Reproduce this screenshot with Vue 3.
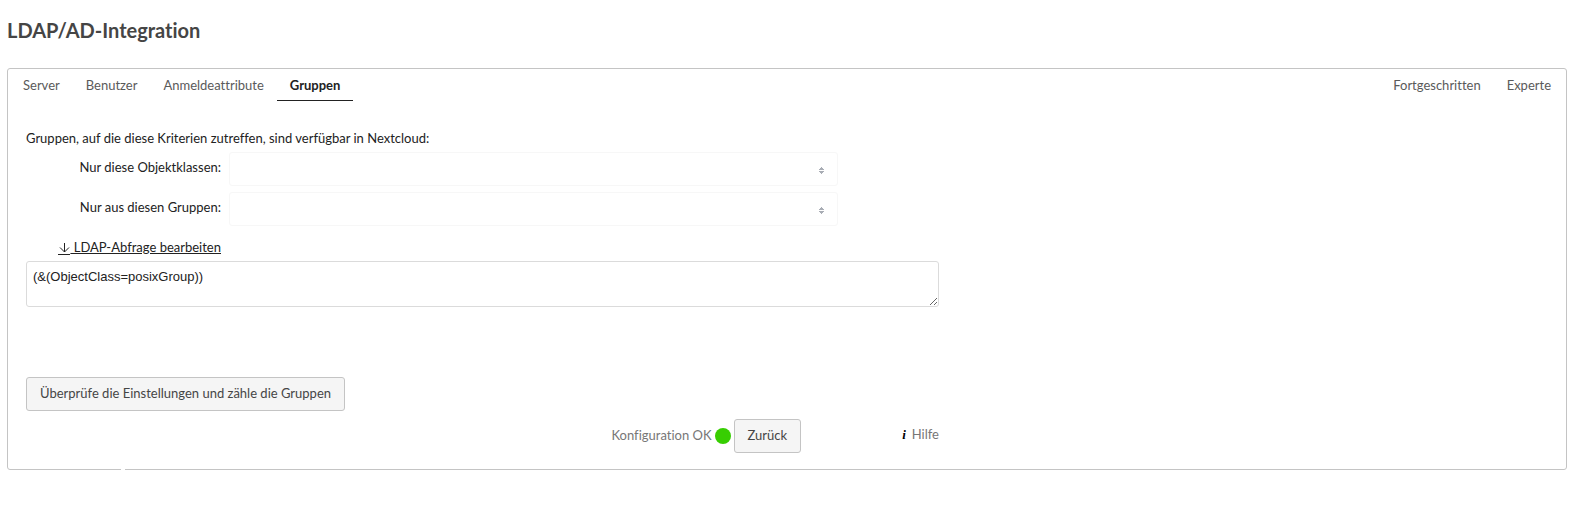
<script setup>
import { ref } from 'vue'

const tabs = ['Server', 'Benutzer', 'Anmeldeattribute', 'Gruppen']
const extraTabs = ['Fortgeschritten', 'Experte']
const active = ref('Gruppen')
const filter = ref('(&(ObjectClass=posixGroup))')
const selects = [
  { id: 'object-classes', label: 'Nur diese Objektklassen:' },
  { id: 'from-groups', label: 'Nur aus diesen Gruppen:' },
]
</script>

<template>
  <main class="page">
    <h2>LDAP/AD-Integration</h2>
    <form class="panel" @submit.prevent>
      <nav class="tabs">
        <a
          v-for="t in tabs"
          :key="t"
          href="#"
          :class="{ active: t === active }"
          @click.prevent="active = t"
        >{{ t }}</a>
        <span class="spacer"></span>
        <a
          v-for="t in extraTabs"
          :key="t"
          href="#"
          :class="{ active: t === active }"
          @click.prevent="active = t"
        >{{ t }}</a>
      </nav>

      <section class="content">
        <p>Gruppen, auf die diese Kriterien zutreffen, sind verfügbar in Nextcloud:</p>
        <div v-for="s in selects" :key="s.id" class="row">
          <label :for="s.id">{{ s.label }}</label>
          <div class="select">
            <select :id="s.id" disabled></select>
            <svg viewBox="0 0 5 7" width="5" height="7" aria-hidden="true">
              <path d="M2 0h1v1h1v1h1v1H0V2h1V1h1zM0 4h5v1H4v1H3v1H2V6H1V5H0z" />
            </svg>
          </div>
        </div>
        <div class="row edit">
          <a href="#" @click.prevent>
            <svg viewBox="0 0 12 13" width="12" height="13" aria-hidden="true">
              <path d="M6.500 1v9M2 5.500l4.500 4.500L11 5.500M0 12.500h12" />
            </svg>
            LDAP-Abfrage bearbeiten</a>
        </div>
        <textarea v-model="filter" aria-label="LDAP-Abfrage" spellcheck="false"></textarea>
        <button type="button" class="count">Überprüfe die Einstellungen und zähle die Gruppen</button>
        <div class="footer">
          <div class="status">
            <span class="caption">Konfiguration OK</span>
            <i class="dot"></i>
            <button type="button">Zurück</button>
          </div>
          <a href="#" class="help caption" @click.prevent>
            <span class="info" aria-hidden="true">i</span>Hilfe</a>
        </div>
      </section>
    </form>
  </main>
</template>

<style>
body {
  margin: 0;
  background: #fff;
}
</style>

<style scoped>
.page {
  box-sizing: border-box;
  padding: 18px 21px 44px 7px;
  font-family: Lato, "Open Sans", sans-serif;
  font-size: 13px;
  line-height: 20px;
  font-variant-ligatures: none;
  color: #222;
}
h2 {
  margin: 0 0 26px;
  font-size: 20px;
  line-height: 24px;
  font-weight: 700;
  color: #454545;
}
.panel {
  position: relative;
  border: 1px solid #c4c4c4;
  border-radius: 3px;
}
/* small break in the lower edge */
.panel::after {
  content: "";
  position: absolute;
  left: 113px;
  bottom: -1px;
  width: 4px;
  height: 1px;
  background: #fff;
}
.tabs {
  display: flex;
  padding: 4px 2px 0;
}
.tabs a {
  padding: 2px 13px 5px;
  color: #5a5a5a;
  text-decoration: none;
  border-bottom: 1px solid transparent;
}
.tabs a.active {
  font-weight: 700;
  color: #222;
  border-bottom-color: #222;
}
.spacer {
  flex: 1;
}
.content {
  max-width: 913px;
  padding: 27px 18px 16px;
}
p {
  margin: 0 0 4px;
}
.row {
  display: flex;
  gap: 8px;
  margin-bottom: 6px;
}
.row label {
  width: 195px;
  padding-top: 5px;
  text-align: right;
}
.select {
  position: relative;
  flex: 1;
  max-width: 609px;
}
select {
  display: block;
  box-sizing: border-box;
  width: 100%;
  height: 34px;
  appearance: none;
  background: #fff;
  border: 1px solid #f7f7f7;
  border-radius: 3px;
  opacity: 1;
}
.select svg {
  position: absolute;
  right: 14px;
  top: 15px;
  fill: #a9adb5;
}
.edit {
  width: 195px;
  justify-content: flex-end;
  padding-top: 5px;
  margin-bottom: 4px;
}
.edit a {
  color: #222;
  text-decoration: underline;
}
.edit svg {
  vertical-align: -3px;
  fill: none;
  stroke: #222;
}
textarea {
  display: block;
  box-sizing: border-box;
  width: 100%;
  height: 46px;
  margin: 0 0 70px;
  padding: 6px;
  border: 1px solid #dbdbdb;
  border-radius: 3px;
  outline: none;
  background: #fff;
  color: #222;
  font: 13px/18px "Liberation Sans", Arial, sans-serif;
}
button {
  height: 34px;
  padding: 0 13px 2px;
  border: 1px solid #c4c4c4;
  border-radius: 3px;
  background: #f5f5f5;
  color: #454545;
  font: inherit;
}
.count {
  display: block;
}
.footer {
  display: flex;
  justify-content: flex-end;
  align-items: center;
  margin-top: 8px;
  color: #777;
}
.status {
  display: flex;
  align-items: center;
}
.caption {
  padding-bottom: 3px;
}
.dot {
  width: 16px;
  height: 16px;
  margin: 0 3px;
  border-radius: 50%;
  background: #37ce02;
}
.help {
  margin-left: 101px;
  color: #777;
  text-decoration: none;
}
.info {
  margin-right: 6px;
  color: #000;
  font: italic 700 13px/20px "Liberation Serif", serif;
}
</style>
